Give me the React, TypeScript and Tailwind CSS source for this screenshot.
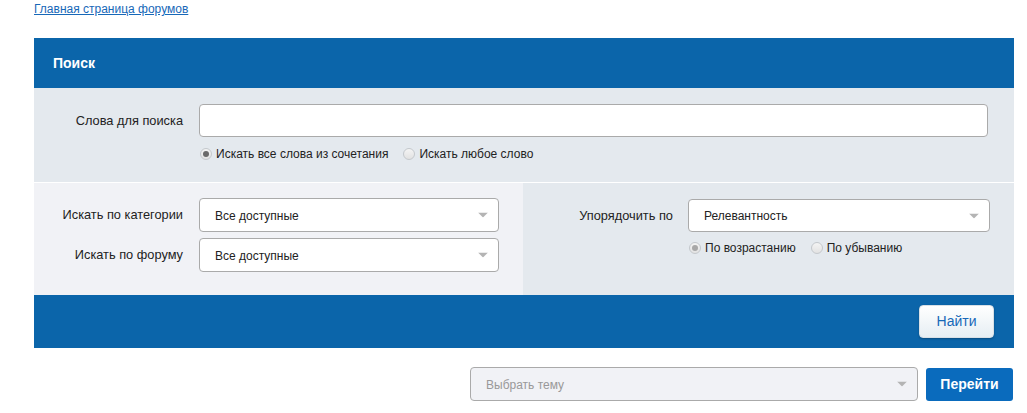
import React from "react";

const font = { fontFamily: '"Liberation Sans", Arial, sans-serif' };

function Radio({ checked, label, faded }: { checked?: boolean; label: string; faded?: boolean }) {
  return (
    <label className="flex items-center gap-[4px] text-[12px] leading-[16px] text-[#222]">
      <span className="w-[12px] h-[12px] rounded-full border border-[#c4c8cc] bg-gradient-to-b from-[#f4f4f4] to-[#e2e2e2] flex items-center justify-center">
        {checked && <span className={`w-[6px] h-[6px] rounded-full ${faded ? "bg-[#a8a8a8]" : "bg-[#6a6a6a]"}`} />}
      </span>
      <span>{label}</span>
    </label>
  );
}

function Select({ value, className, muted }: { value: string; className: string; muted?: boolean }) {
  return (
    <div
      className={`relative flex items-center rounded-[4px] border border-[#aaaaaa] pl-[15px] text-[12px] ${
        muted ? "bg-[#f1f2f6] text-[#999]" : "bg-white text-[#222]"
      } ${className}`}
    >
      <span className="pt-[1px]">{value}</span>
      <svg className="absolute right-[10px] top-1/2 -translate-y-1/2" width="10" height="5" viewBox="0 0 10 5">
        <path d="M0 0 L10 0 L5 5 Z" fill="#b4b4b4" />
      </svg>
    </div>
  );
}

export default function App() {
  return (
    <div className="w-[1027px] h-[413px] bg-white pl-[34px] pr-[13px]" style={font}>
      <div className="pt-[1px] h-[38px] leading-[16px]">
        <a href="#" className="block w-max text-[12px] leading-[16px] text-[#1768b8] underline">
          Главная страница форумов
        </a>
      </div>
      <div className="w-[980px]">
        <div className="h-[50px] bg-[#0b65aa] flex items-center pl-[19px]">
          <span className="text-white text-[14px] font-bold">Поиск</span>
        </div>
        <div className="h-[94px] bg-[#e4e9ee] pt-[16px]">
          <div className="flex items-center">
            <div className="w-[149px] text-right text-[12.8px] text-[#222]">Слова для поиска</div>
            <div className="ml-[16px] w-[789px] h-[33px] bg-white rounded-[4px] border border-[#aaaaaa]" />
          </div>
          <div className="flex items-center gap-[15px] ml-[166px] mt-[9px]">
            <Radio checked label="Искать все слова из сочетания" />
            <Radio label="Искать любое слово" />
          </div>
        </div>
        <div className="h-[1px] bg-white" />
        <div className="flex h-[112px]">
          <div className="w-[489px] bg-[#f1f2f6] pt-[15px]">
            <div className="flex items-center">
              <div className="w-[149px] text-right text-[12.8px] text-[#222]">Искать по категории</div>
              <Select value="Все доступные" className="ml-[16px] w-[300px] h-[34px]" />
            </div>
            <div className="flex items-center mt-[6px]">
              <div className="w-[149px] text-right text-[12.8px] text-[#222]">Искать по форуму</div>
              <Select value="Все доступные" className="ml-[16px] w-[300px] h-[34px]" />
            </div>
          </div>
          <div className="flex-1 bg-[#e4e9ee] pt-[16px]">
            <div className="flex items-center">
              <div className="w-[150px] text-right text-[12.8px] text-[#222]">Упорядочить по</div>
              <Select value="Релевантность" className="ml-[15px] w-[302px] h-[33px]" />
            </div>
            <div className="flex items-center gap-[15px] ml-[166px] mt-[8px]">
              <Radio checked faded label="По возрастанию" />
              <Radio label="По убыванию" />
            </div>
          </div>
        </div>
        <div className="h-[53px] bg-[#0b65aa] flex items-center justify-end pr-[20px]">
          <button className="w-[75px] h-[33px] rounded-[4px] bg-gradient-to-b from-white to-[#e6eef3] border border-[#d8e0e6] text-[#1768b8] text-[14px] shadow-[0_1px_2px_rgba(0,0,0,0.25)]">
            Найти
          </button>
        </div>
        <div className="flex justify-end items-center mt-[19px] pr-[1px]">
          <Select value="Выбрать тему" muted className="w-[448px] h-[34px]" />
          <button className="ml-[8px] w-[87px] h-[33px] rounded-[3px] bg-[#0a6bbd] text-white text-[14px] font-bold">
            Перейти
          </button>
        </div>
      </div>
    </div>
  );
}
